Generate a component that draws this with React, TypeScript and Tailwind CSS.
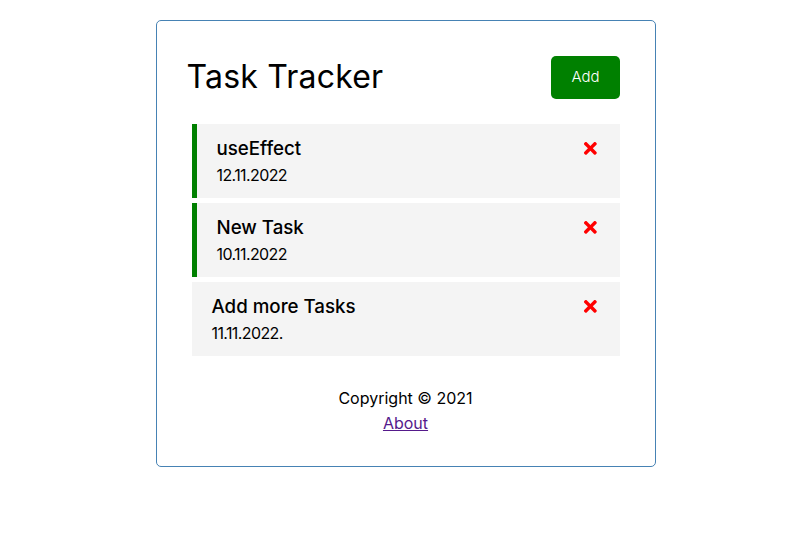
import React, { useState } from 'react';
import { FaTimes } from 'react-icons/fa';

interface Task {
  id: number;
  text: string;
  day: string;
  reminder: boolean;
}

const initialTasks: Task[] = [
  { id: 1, text: 'useEffect', day: '12.11.2022', reminder: true },
  { id: 2, text: 'New Task', day: '10.11.2022', reminder: true },
  { id: 3, text: 'Add more Tasks', day: '11.11.2022.', reminder: false },
];

const TaskItem = ({ task, onDelete }: { task: Task; onDelete: (id: number) => void }) => (
  <div
    className={
      task.reminder
        ? 'bg-[#f4f4f4] mx-[5px] my-[5px] px-[20px] py-[10px] border-l-[5px] border-l-[#008000]'
        : 'bg-[#f4f4f4] mx-[5px] my-[5px] px-[20px] py-[10px]'
    }
  >
    <h3 className="flex items-center justify-between text-[18.72px] leading-[29px] font-medium">
      {task.text}
      <FaTimes className="text-[#ff0000] cursor-pointer" onClick={() => onDelete(task.id)} />
    </h3>
    <p className="text-[16px] leading-[25px] tracking-[-0.6px]">{task.day}</p>
  </div>
);

export default function App() {
  const [tasks, setTasks] = useState<Task[]>(initialTasks);

  return (
    <div className="min-h-[535px] bg-white text-black font-['Inter','Noto_Sans',sans-serif] pt-[20px] pl-[16px]">
      <div className="w-[500px] mx-auto border border-[#4682b4] rounded-[5px] p-[30px]">
        {/* header */}
        <header className="flex items-center justify-between mb-[20px]">
          <h1 className="text-[32px] leading-[48px] font-normal tracking-[0.2px]">Task Tracker</h1>
          <button className="bg-[#008000] text-white rounded-[5px] m-[5px] px-[20px] py-[10px] text-[15px] leading-[22.5px] font-light">
            Add
          </button>
        </header>

        {tasks.length > 0 ? (
          tasks.map((t) => (
            <TaskItem key={t.id} task={t} onDelete={(id) => setTasks(tasks.filter((x) => x.id !== id))} />
          ))
        ) : (
          <p>No Tasks To Show</p>
        )}

        <footer className="mt-[30px] text-center text-[16px] leading-[25px]">
          <p>Copyright &copy; 2021</p>
          <a href="#" className="text-[#551a8b] underline">About</a>
        </footer>
      </div>
    </div>
  );
}
